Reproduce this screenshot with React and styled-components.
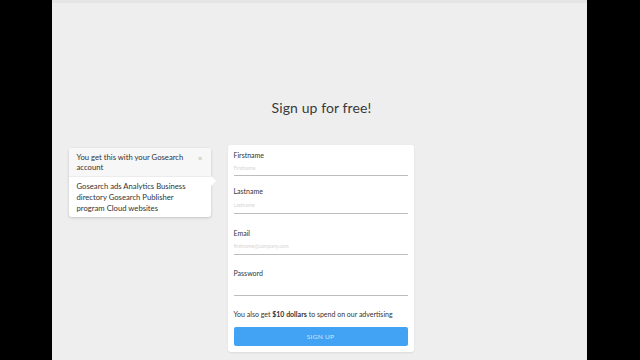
import React from "react";
import styled, { createGlobalStyle } from "styled-components";

const Global = createGlobalStyle`
  html, body { margin: 0; padding: 0; background: #000; }
  body { font-family: "Lato", "Open Sans", sans-serif; }
  * { box-sizing: border-box; }
`;

const Frame = styled.div`
  width: 640px;
  height: 360px;
  display: flex;
  background: #000;
`;

const Screen = styled.div`
  margin-left: 52px;
  width: 535px;
  height: 360px;
  background: #eeeeee;
  border-top: 3px solid #e5e5e5;
  display: flex;
  flex-direction: column;
  align-items: center;
  overflow: hidden;
`;

const Title = styled.h1`
  margin: 96px 0 0 0;
  font-size: 14px;
  font-weight: 400;
  color: #3a3a3a;
  letter-spacing: 0.1px;
  line-height: 18px;
  transform: translateX(2px);
`;

const Stage = styled.div`
  position: relative;
  margin-top: 28px;
  transform: translateX(1px);
`;

const Card = styled.form`
  width: 186px;
  background: #fff;
  border-radius: 3px;
  box-shadow: 0 1px 2px rgba(0, 0, 0, 0.08);
  padding: 5px 6px 6px 6px;
  display: flex;
  flex-direction: column;
`;

const Field = styled.div`
  display: flex;
  flex-direction: column;
  margin-bottom: ${(p) => p.$mb || 13}px;
`;

const Label = styled.label`
  font-size: 7px;
  color: #333;
  line-height: 10px;
`;

const Input = styled.input`
  border: none;
  border-bottom: 1px solid #bdbdbd;
  background: transparent;
  font-family: inherit;
  font-size: 5px;
  color: #333;
  padding: 0;
  height: ${(p) => p.$h || 16}px;
  outline: none;
  &::placeholder { color: #d4d4d4; }
`;

const Note = styled.p`
  margin: 2px 0 8px 0;
  font-size: 7px;
  color: #333;
  line-height: 10px;
  b { font-weight: 700; }
`;

const Button = styled.button`
  height: 19px;
  border: none;
  border-radius: 2px;
  background: #42a2f3;
  color: #cfe6fb;
  font-family: inherit;
  font-size: 6.5px;
  letter-spacing: 0.3px;
  text-transform: uppercase;
`;

const Tip = styled.div`
  position: absolute;
  right: calc(100% + 17px);
  top: 3px;
  width: 142px;
  background: #fff;
  border-radius: 3px;
  box-shadow: 0 1px 3px rgba(0, 0, 0, 0.18);
`;

const TipHead = styled.div`
  display: flex;
  justify-content: space-between;
  align-items: flex-start;
  background: #f7f7f7;
  border-bottom: 1px solid #ececec;
  border-radius: 3px 3px 0 0;
  padding: 4px 8px 4px 8px;
  font-size: 7.7px;
  line-height: 10px;
  color: #333;
`;

const Close = styled.span`
  color: #b5b5b5;
  font-size: 8px;
  line-height: 10px;
  margin-top: 1px;
  margin-left: 8px;
`;

const TipBody = styled.div`
  position: relative;
  padding: 4px 8px 3px 8px;
  font-size: 7.7px;
  line-height: 11px;
  color: #333;
  &::after {
    content: "";
    position: absolute;
    right: -5px;
    top: -1px;
    width: 0;
    height: 0;
    border-top: 5px solid transparent;
    border-bottom: 5px solid transparent;
    border-left: 5px solid #fff;
  }
`;

export default function App() {
  return (
    <Frame>
      <Global />
      <Screen>
        <Title>Sign up for free!</Title>
        <Stage>
          <Tip>
            <TipHead>
              <span>You get this with your Gosearch account</span>
              <Close>×</Close>
            </TipHead>
            <TipBody>
              Gosearch ads Analytics Business directory Gosearch Publisher program Cloud websites
            </TipBody>
          </Tip>
          <Card onSubmit={(e) => e.preventDefault()}>
            <Field $mb={10}>
              <Label>Firstname</Label>
              <Input placeholder="Firstname" />
            </Field>
            <Field $mb={14}>
              <Label>Lastname</Label>
              <Input placeholder="Lastname" $h={18} />
            </Field>
            <Field $mb={13}>
              <Label>Email</Label>
              <Input placeholder="firstname@company.com" $h={17} />
            </Field>
            <Field $mb={11}>
              <Label>Password</Label>
              <Input type="password" $h={18} />
            </Field>
            <Note>
              You also get <b>$10 dollars</b> to spend on our advertising
            </Note>
            <Button type="button">Sign up</Button>
          </Card>
        </Stage>
      </Screen>
    </Frame>
  );
}
